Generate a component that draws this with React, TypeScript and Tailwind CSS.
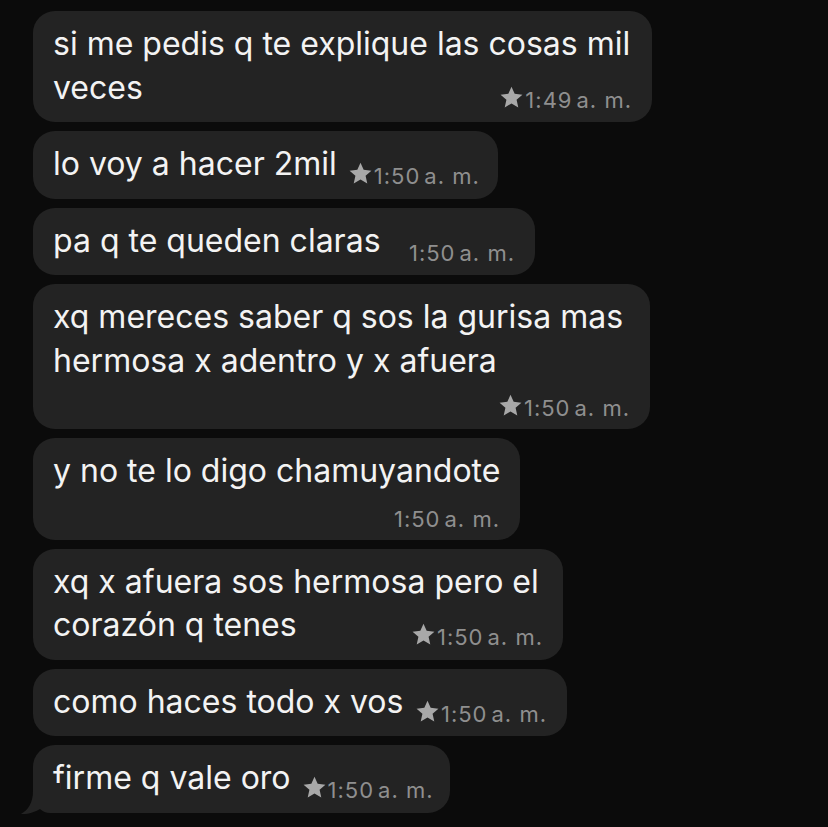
import React from 'react'

type Msg = {
  w: number
  lines: string[]
  time: string
  star: boolean
  mode: 'inline' | 'below'
  tail?: boolean
}

const messages: Msg[] = [
  { w: 619, lines: ['si me pedis q te explique las cosas mil', 'veces'], time: '1:49', star: true, mode: 'inline' },
  { w: 465, lines: ['lo voy a hacer 2mil'], time: '1:50', star: true, mode: 'inline' },
  { w: 502, lines: ['pa q te queden claras'], time: '1:50', star: false, mode: 'inline' },
  { w: 617, lines: ['xq mereces saber q sos la gurisa mas', 'hermosa x adentro y x afuera'], time: '1:50', star: true, mode: 'below' },
  { w: 487, lines: ['y no te lo digo chamuyandote'], time: '1:50', star: false, mode: 'below' },
  { w: 530, lines: ['xq x afuera sos hermosa pero el', 'corazón q tenes'], time: '1:50', star: true, mode: 'inline' },
  { w: 534, lines: ['como haces todo x vos'], time: '1:50', star: true, mode: 'inline' },
  { w: 417, lines: ['firme q vale oro'], time: '1:50', star: true, mode: 'inline', tail: true },
]

function Star() {
  return (
    <svg viewBox="0 0 24 24" className="w-[23px] h-[23px] mr-[2px] shrink-0 relative top-[1px]">
      <path
        fill="#a8a8a8"
        d="M12 0.8l3.3 7.4 8.1.8-6.1 5.4 1.8 8-7.1-4.2-7.1 4.2 1.8-8L0.6 9l8.1-.8z"
      />
    </svg>
  )
}

function Time({ time, star }: { time: string; star: boolean }) {
  return (
    <span className="relative top-[9px] inline-flex items-baseline text-[22px] leading-none text-[#8f8f8f] tracking-[1px] whitespace-nowrap">
      {star && <Star />}
      <span>{time}</span>
      <span className="ml-[4px]">a. m.</span>
    </span>
  )
}

function Bubble({ m }: { m: Msg }) {
  const last = m.lines[m.lines.length - 1]
  const rest = m.lines.slice(0, -1)

  return (
    <div
      className="relative bg-[#232323] rounded-[22px] pl-[20px] pr-[20px] pt-[11px] pb-[13px] text-[#f3f3f3] text-[32px] leading-[43.5px]"
      style={{ width: m.w }}
    >
      {m.mode === 'inline' ? (
        <>
          {rest.map((l) => (
            <div key={l} className="whitespace-nowrap">{l}</div>
          ))}
          <div className="flex items-baseline justify-between gap-3">
            <span className="whitespace-nowrap">{last}</span>
            <Time time={m.time} star={m.star} />
          </div>
        </>
      ) : (
        <>
          {m.lines.map((l) => (
            <div key={l} className="whitespace-nowrap">{l}</div>
          ))}
          <div className="text-right text-[22px] leading-[34px]">
            <Time time={m.time} star={m.star} />
          </div>
        </>
      )}

      {/* tail on the last bubble of the group */}
      {m.tail && (
        <svg
          viewBox="0 0 40 32"
          className="absolute left-[-13px] bottom-[-2px] w-[40px] h-[32px] overflow-visible"
        >
          <path
            fill="#232323"
            d="M13 0 L13 8 C13 20 8 27 1 31 C8 31.5 15 29 20 26 C23 28.5 26 30 30 30 L40 30 L40 0 Z"
          />
        </svg>
      )}
    </div>
  )
}

export default function App() {
  return (
    <div
      className="w-[828px] h-[827px] overflow-hidden bg-[#0b0b0b] pt-[11px] pl-[33px] flex flex-col gap-[9px]"
      style={{ fontFamily: 'Inter, "Liberation Sans", sans-serif' }}
    >
      {messages.map((m, i) => (
        <Bubble key={i} m={m} />
      ))}
    </div>
  )
}
